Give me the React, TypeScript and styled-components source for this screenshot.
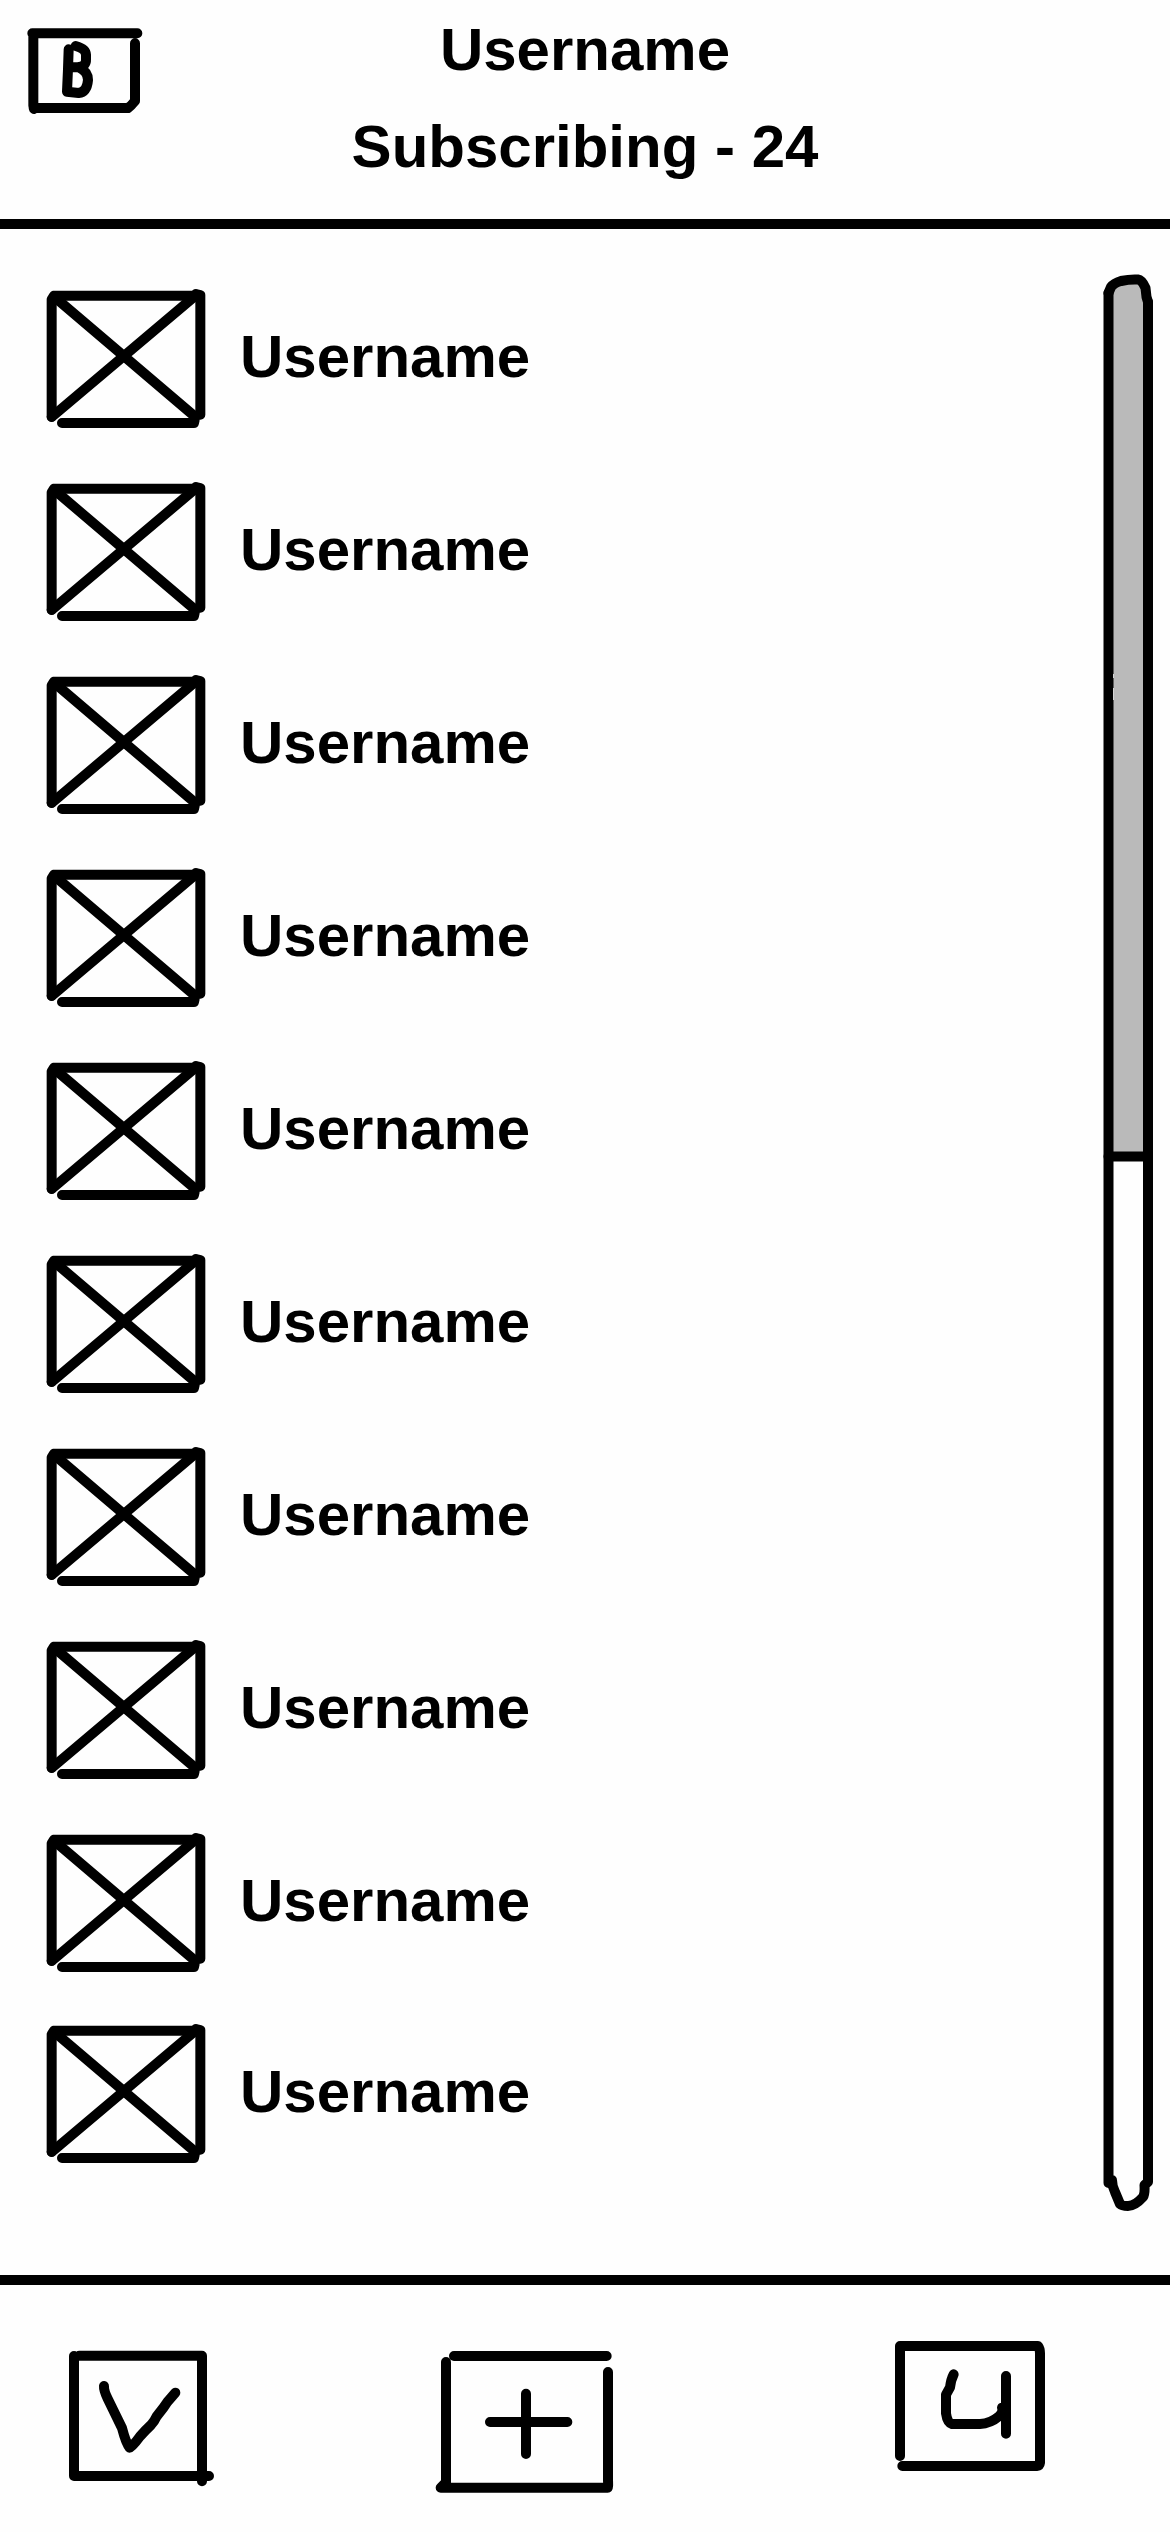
import React from 'react';
import styled, { createGlobalStyle } from 'styled-components';

const GlobalStyle = createGlobalStyle`
  body {
    margin: 0;
    background: #fefefe;
  }
`;

const INK = '#000';
const FONT = '"Liberation Sans", Arial, Helvetica, sans-serif';

const Screen = styled.div`
  display: flex;
  flex-direction: column;
  width: 1170px;
  height: 2532px;
  overflow: hidden;
  background: #fefefe;
  color: ${INK};
  font-family: ${FONT};
  font-weight: 700;
  font-size: 60px;
`;

const Header = styled.header`
  display: grid;
  grid-template-columns: 1fr auto 1fr;
  height: 219px;
  border-bottom: 10px solid ${INK};
`;

const Titles = styled.div`
  display: flex;
  flex-direction: column;
  align-items: center;
  padding-top: 1px;
`;

const Title = styled.h1`
  margin: 0;
  font-size: 60px;
  line-height: 97px;
  white-space: nowrap;
`;

const Main = styled.main`
  display: flex;
  justify-content: space-between;
  height: 2046px;
`;

const List = styled.ul`
  display: flex;
  flex-direction: column;
  margin: 0;
  padding: 53px 0 0;
  list-style: none;
`;

const Row = styled.li<{ $height: number }>`
  display: flex;
  align-items: flex-start;
  height: ${(p) => p.$height}px;
`;

const Name = styled.span`
  line-height: 150px;
`;

const Footer = styled.footer`
  display: grid;
  grid-template-columns: 220px 220px 220px;
  column-gap: 160px;
  padding-left: 40px;
  height: 247px;
  border-top: 10px solid ${INK};
`;

const IconButton = styled.button<{ $shift?: number }>`
  display: flex;
  align-items: flex-start;
  margin: 0 0 0 ${(p) => p.$shift ?? 0}px;
  padding: 0;
  border: 0;
  background: none;
`;

const Sketch = styled.svg<{ $w: number; $h: number }>`
  display: block;
  flex: none;
  width: ${(p) => p.$w}px;
  height: ${(p) => p.$h}px;
  fill: none;
  stroke: ${INK};
  stroke-linecap: round;
  stroke-linejoin: round;
`;

function BackIcon() {
  return (
    <Sketch $w={180} $h={140} viewBox="0 0 540 420" strokeWidth={30}>
      <path d="M97 100H412M100 100V316L102 327M101 324H384Q393 318 405 303V130" />
      <path d="M206 148Q204 215 201 275L236 279Q261 276 264 240Q264 215 236 202H212M236 201Q259 199 258 178V164Q257 146 227 138" />
    </Sketch>
  );
}

function Avatar() {
  return (
    <Sketch $w={240} $h={160} viewBox="-90 36 720 480" strokeWidth={30}>
      <path d="M72 77H500L498 72L511 75V434M72 77L65 88V440M96 459H492L494 450" />
      <path d="M72 80L495 440M500 74L65 441" />
    </Sketch>
  );
}

function ScrollBar() {
  return (
    <Sketch $w={100} $h={2046} viewBox="1070 229 100 2046" strokeWidth={10}>
      <path
        d="M1108.5 293L1117 284L1127 280H1139L1146 290L1148 302V1156.5H1108.5Z"
        fill="#bababa"
        stroke="none"
      />
      <path d="M1108.5 293V2183L1112 2180Q1112 2186 1115 2192L1120 2204Q1122 2206 1128 2206Q1135 2206 1143 2197Q1145 2194 1144.5 2185L1148 2182V302" />
      <path d="M1108.5 293L1111 287Q1114 283 1121 281Q1130 279 1138 279.5Q1142 280 1145.5 288L1146.5 297L1148 302M1108.5 1156.5H1148" />
      <path d="M1113.5 674v4M1113.5 688v12" stroke="#d6d6d6" strokeWidth={1} strokeLinecap="butt" />
    </Sketch>
  );
}

function ViewIcon() {
  return (
    <Sketch $w={220} $h={247} viewBox="0 75 660 741" strokeWidth={30}>
      <path d="M102 288V648H507M118 287.500H486V664" />
      <path d="M192 378Q191 391 203 416L246 504Q258 550 269 563Q276 562 300 529Q316 511 333 495Q343 484 350 469L371 442L382 426L406 398" />
    </Sketch>
  );
}

function AddIcon() {
  return (
    <Sketch $w={220} $h={247} viewBox="0 75 660 741" strokeWidth={30}>
      <path d="M102 288H560M78 306V667L62 683H563Q565 683 564 660V336" />
      <path d="M210 486H442M318 401V582" />
    </Sketch>
  );
}

function UserIcon() {
  return (
    <Sketch $w={220} $h={247} viewBox="0 75 660 741" strokeWidth={30}>
      <path d="M90 588V258H504Q510 266 510 280V608Q509 617 500 618H97" />
      <path d="M251 343Q243 358 240 382L228 404V460Q232 489 246 492H330Q361 491 388 468Q401 455 396 443M408 348V521" />
    </Sketch>
  );
}

const users = Array.from({ length: 10 }, (_, id) => ({ id, name: 'Username' }));

export default function App() {
  return (
    <>
      <GlobalStyle />
      <Screen>
        <Header>
          <IconButton aria-label="Back">
            <BackIcon />
          </IconButton>
          <Titles>
            <Title>Username</Title>
            <Title>Subscribing - 24</Title>
          </Titles>
        </Header>
        <Main>
          <List>
            {users.map((user) => (
              <Row key={user.id} $height={user.id === 8 ? 191 : 193}>
                <Avatar />
                <Name>{user.name}</Name>
              </Row>
            ))}
          </List>
          <ScrollBar />
        </Main>
        <Footer>
          <IconButton aria-label="View">
            <ViewIcon />
          </IconButton>
          <IconButton aria-label="Add">
            <AddIcon />
          </IconButton>
          <IconButton aria-label="User" $shift={70}>
            <UserIcon />
          </IconButton>
        </Footer>
      </Screen>
    </>
  );
}
